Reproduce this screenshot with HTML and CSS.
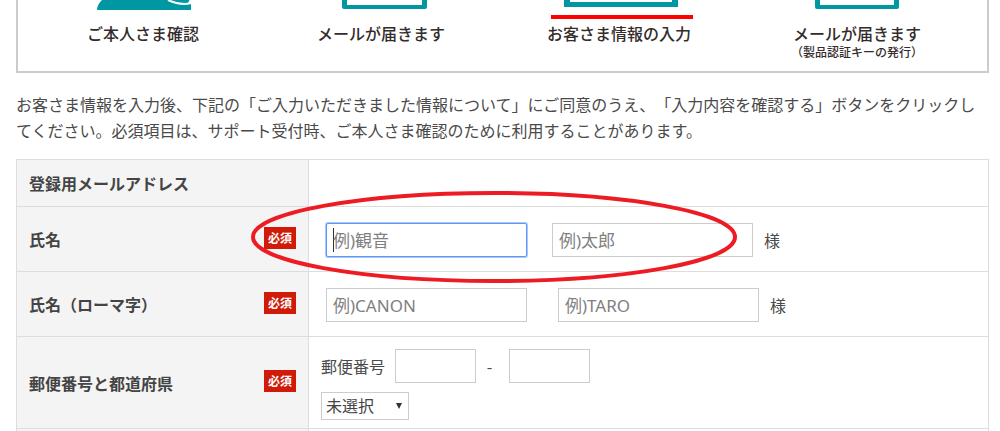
FILE: index.html
```html
<!DOCTYPE html>
<html lang="ja">
<head>
  <meta charset="UTF-8">
  <title>お客さま情報の入力</title>
  <link rel="stylesheet" href="styles.css">
</head>
<body>

<div class="page">

  <!-- 登録の流れ -->
  <ol class="steps">
    <li>
      <svg width="150" height="20" viewBox="0 0 150 20">
        <path d="M34 0C31 3 29 6 29 10H123V0Z" fill="#0097a3"/>
        <path d="M100 0Q113 6 123 3" fill="none" stroke="#fff" stroke-width="2"/>
        <path d="M122 -1H126V4L120 3Z" fill="#fff"/>
      </svg>
      <span class="caption">ご本人さま確認</span>
    </li>
    <li>
      <svg width="150" height="20" viewBox="0 0 150 20">
        <path d="M36 0H121V7Q121 9 119 9H38Q36 9 36 7Z" fill="#0097a3"/>
        <path d="M41 0H116V5H41Z" fill="#fff"/>
      </svg>
      <span class="caption">メールが届きます</span>
    </li>
    <li>
      <svg width="150" height="20" viewBox="0 0 150 20">
        <path d="M20 0H134V7H20Z" fill="#0097a3"/>
        <path d="M26 0H128V2H26Z" fill="#fff"/>
        <path d="M7 15H149V19H7Z" fill="#f00"/>
      </svg>
      <span class="caption">お客さま情報の入力</span>
    </li>
    <li>
      <svg width="150" height="20" viewBox="0 0 150 20">
        <path d="M33 0H117V7Q117 9 115 9H35Q33 9 33 7Z" fill="#0097a3"/>
        <path d="M38 0H112V5H38Z" fill="#fff"/>
      </svg>
      <span class="caption">メールが届きます</span>
      <span class="caption-sub">（製品認証キーの発行）</span>
    </li>
  </ol>

  <p class="lead">お客さま情報を入力後、下記の「ご入力いただきました情報について」にご同意のうえ、「入力内容を確認する」ボタンをクリックしてください。必須項目は、サポート受付時、ご本人さま確認のために利用することがあります。</p>

  <form class="entry">
    <table>
      <tbody>
        <tr class="row-mail">
          <th scope="row">登録用メールアドレス</th>
          <td></td>
        </tr>
        <tr class="row-name">
          <th scope="row"><div class="head">氏名<span class="required">必須</span></div></th>
          <td>
            <div class="fields names">
              <input type="text" class="current" placeholder="例)観音" aria-label="姓">
              <input type="text" placeholder="例)太郎" aria-label="名">
              <span class="honorific">様</span>
            </div>
          </td>
        </tr>
        <tr class="row-name">
          <th scope="row"><div class="head">氏名（ローマ字）<span class="required">必須</span></div></th>
          <td>
            <div class="fields names roman">
              <input type="text" placeholder="例)CANON" aria-label="姓（ローマ字）">
              <input type="text" placeholder="例)TARO" aria-label="名（ローマ字）">
              <span class="honorific">様</span>
            </div>
          </td>
        </tr>
        <tr class="row-address">
          <th scope="row"><div class="head">郵便番号と都道府県<span class="required">必須</span></div></th>
          <td>
            <div class="fields zip">
              <label for="zip1">郵便番号</label>
              <input type="text" id="zip1">
              <span class="hyphen">-</span>
              <input type="text" id="zip2" aria-label="郵便番号（下4桁）">
            </div>
            <div class="pref">
              <select aria-label="都道府県">
                <option>未選択</option>
              </select>
            </div>
          </td>
        </tr>
        <tr class="row-next">
          <th scope="row"></th>
          <td></td>
        </tr>
      </tbody>
    </table>

    <!-- 入力箇所を示す赤丸 -->
    <svg class="marker" width="486" height="94" viewBox="0 0 486 94">
      <ellipse cx="243" cy="47" rx="241" ry="44" fill="none" stroke="#ed1c24" stroke-width="4"/>
    </svg>
  </form>

</div>

</body>
</html>
```

FILE: styles.css
```css
* {
  box-sizing: border-box;
}
body {
  margin: 0;
  font-family: "Noto Sans CJK JP", sans-serif;
  font-size: 16px;
  line-height: 26px;
  color: #4a4a4a;
  background: #fff;
  text-spacing-trim: space-all;
}
.page {
  height: 100vh;
  padding: 0 11px 0 16px;
  overflow: hidden;
}

/* 登録の流れ */
.steps {
  display: grid;
  grid-template-columns: repeat(4, 1fr);
  margin: 0;
  padding: 0 11px 11px 6px;
  list-style: none;
  border: 2px solid #ccc;
  border-top: none;
}
.steps li {
  display: flex;
  flex-direction: column;
  align-items: center;
  color: #332c2b;
}
.caption {
  margin-top: 2px;
  font-weight: 500;
  line-height: 22px;
}
.caption-sub {
  font-size: 12px;
  font-weight: 500;
  line-height: 16px;
}
.lead {
  margin: 18px 0 16px;
}

/* 入力フォーム */
.entry {
  position: relative;
}
table {
  width: 100%;
  border-collapse: collapse;
  table-layout: fixed;
}
th, td {
  padding: 0 12px;
  border: 1px solid #ddd;
  text-align: left;
  vertical-align: middle;
}
th {
  width: 292px;
  background: #f4f4f4;
  color: #444;
  font-weight: bold;
}
.row-mail {
  height: 47px;
}
.row-name {
  height: 65px;
}
.row-address td {
  padding-top: 12px;
  padding-bottom: 8px;
}
.row-next {
  height: 47px;
}
.head {
  display: flex;
  align-items: center;
  justify-content: space-between;
}
.required {
  padding: 0 4px;
  margin-bottom: 3px;
  background: #cf1b08;
  color: #fff;
  font-size: 12px;
  line-height: 22px;
}
.fields {
  display: flex;
  align-items: center;
}
input, select {
  border: 1px solid #ccc;
  border-radius: 0;
  background: #fff;
  color: #444;
  font-family: "Noto Sans", "Noto Sans CJK JP", sans-serif;
  font-size: 17px;
}
input {
  height: 34px;
  padding: 0 6px;
}
input::placeholder {
  color: #808080;
}
.names {
  gap: 25px;
  padding: 2px 0 0 5px;
}
.names input {
  width: 201px;
}
.roman {
  gap: 31px;
}
.names .current {
  border-color: #5e97f6;
  border-radius: 2px;
  box-shadow: 0 0 0 1px #a9c8fa;
  background: linear-gradient(#333, #333) 6px center / 1px 24px no-repeat #fff;
}
.honorific {
  margin-left: -14px;
}
.roman .honorific {
  margin-left: -20px;
}
.zip input {
  width: 81px;
}
.zip label {
  margin-right: 10px;
}
.hyphen {
  width: 33px;
  padding-right: 6px;
  text-align: center;
}
.pref {
  position: relative;
  width: 88px;
  height: 28px;
  margin-top: 9px;
}
.pref::after {
  content: "";
  position: absolute;
  top: 11px;
  right: 7px;
  border: 3px solid transparent;
  border-top: 6px solid #333;
  border-bottom: none;
  pointer-events: none;
}
select {
  display: block;
  width: 100%;
  height: 100%;
  padding: 0 4px;
  appearance: none;
  font-size: 16px;
}
.marker {
  position: absolute;
  top: 31px;
  left: 235px;
  pointer-events: none;
}
```
